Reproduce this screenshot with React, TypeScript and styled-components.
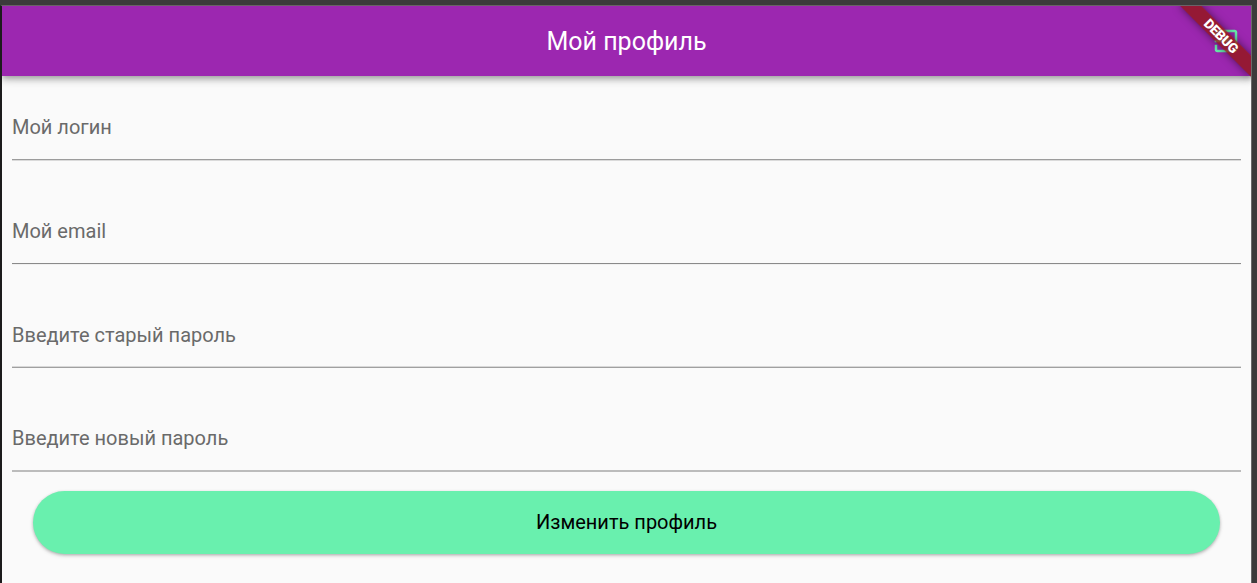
import React from "react";
import styled, { createGlobalStyle } from "styled-components";

const GlobalStyle = createGlobalStyle`
  * { box-sizing: border-box; }
  body { margin: 0; background: #3c3b3b; font-family: Roboto, "Noto Sans", sans-serif; overflow: hidden; }
`;

const Desktop = styled.div`
  height: 583px;
  padding: 5px 5px 0 0;
  background: #3c3b3b;
`;

const Window = styled.div`
  height: 578px;
  border-left: 2px solid #1c1b1c;
  border-right: 1px solid #6a6a6a;
  border-top: 1px solid #6a6268;
  background: #fafafa;
  position: relative;
  overflow: hidden;
`;

const AppBar = styled.header`
  height: 70px;
  display: grid;
  grid-template-columns: 1fr auto 1fr;
  align-items: center;
  padding-right: 10px;
  background: #9c27b0;
  box-shadow: 0 2.5px 5px -1px rgba(0, 0, 0, 0.2), 0 5px 6px rgba(0, 0, 0, 0.14), 0 1px 12px rgba(0, 0, 0, 0.12);
`;

const Title = styled.h1`
  grid-column: 2;
  margin: 0 -10px 0 0;
  padding-top: 2px;
  font-size: 25px;
  line-height: 30px;
  font-weight: 450;
  color: #fff;
`;

const ExitButton = styled.button`
  justify-self: end;
  width: 30px;
  height: 30px;
  padding: 0;
  border: 0;
  background: none;
  color: #69f0ae;
  svg { display: block; }
`;

const Banner = styled.div`
  position: absolute;
  top: 35px;
  right: -50px;
  width: 100px;
  height: 15px;
  transform-origin: 50px -35px;
  transform: rotate(45deg);
  background: rgba(148, 22, 22, 0.8);
  box-shadow: 0 0 8px rgba(0, 0, 0, 0.5);
  color: #fff;
  font-size: 13.6px;
  line-height: 15px;
  font-weight: 900;
  letter-spacing: -0.35px;
  text-align: center;
`;

const Form = styled.form`
  display: flex;
  flex-direction: column;
  padding: 0 10px;
`;

const Field = styled.label<{ $height: number }>`
  height: ${(p) => p.$height}px;
  display: flex;
  flex-direction: column;
  justify-content: flex-end;
  color: #6a6a6a;
  font-size: 20px;
  line-height: 24px;
`;

const Underline = styled.span<{ $upper: string; $lower: string; $gap: number }>`
  height: 2px;
  margin-top: ${(p) => p.$gap}px;
  border-top: 1px solid ${(p) => p.$upper};
  border-bottom: 1px solid ${(p) => p.$lower};
`;

const SubmitButton = styled.button`
  height: 63px;
  margin: 19px 21px 0;
  padding: 0 0 2px;
  border: 0;
  border-radius: 32px;
  background: #69f0ae;
  box-shadow: 0 1px 3px rgba(0, 0, 0, 0.22), 0 2px 4px rgba(0, 0, 0, 0.12);
  color: #000;
  font: 400 20px/24px Roboto, "Noto Sans", sans-serif;
`;

const fields = [
  { label: "Мой логин", height: 85, gap: 20, upper: "#9c9c9c", lower: "#dadada" },
  { label: "Мой email", height: 104, gap: 20, upper: "#8a8a8a", lower: "#f0f0f0" },
  { label: "Введите старый пароль", height: 103, gap: 19, upper: "#d8d8d8", lower: "#a0a0a0" },
  { label: "Введите новый пароль", height: 104, gap: 20, upper: "#bcbcbc", lower: "#bcbcbc" },
];

export default function App() {
  return (
    <Desktop>
      <GlobalStyle />
      <Window>
        <AppBar>
          <Title>Мой профиль</Title>
          <ExitButton type="button" aria-label="Выйти">
            <svg width="30" height="30" viewBox="0 0 24 24" fill="currentColor">
              <path d="M10.09 15.59L11.5 17l5-5-5-5-1.41 1.41L12.67 11H3v2h9.67l-2.58 2.59zM19 3H5c-1.11 0-2 .9-2 2v4h2V5h14v14H5v-4H3v4c0 1.1.89 2 2 2h14c1.1 0 2-.9 2-2V5c0-1.1-.9-2-2-2z" />
            </svg>
          </ExitButton>
        </AppBar>
        <Form>
          {fields.map((f) => (
            <Field key={f.label} $height={f.height}>
              {f.label}
              <Underline $upper={f.upper} $lower={f.lower} $gap={f.gap} />
            </Field>
          ))}
          <SubmitButton type="button">Изменить профиль</SubmitButton>
        </Form>
        <Banner>DEBUG</Banner>
      </Window>
    </Desktop>
  );
}
